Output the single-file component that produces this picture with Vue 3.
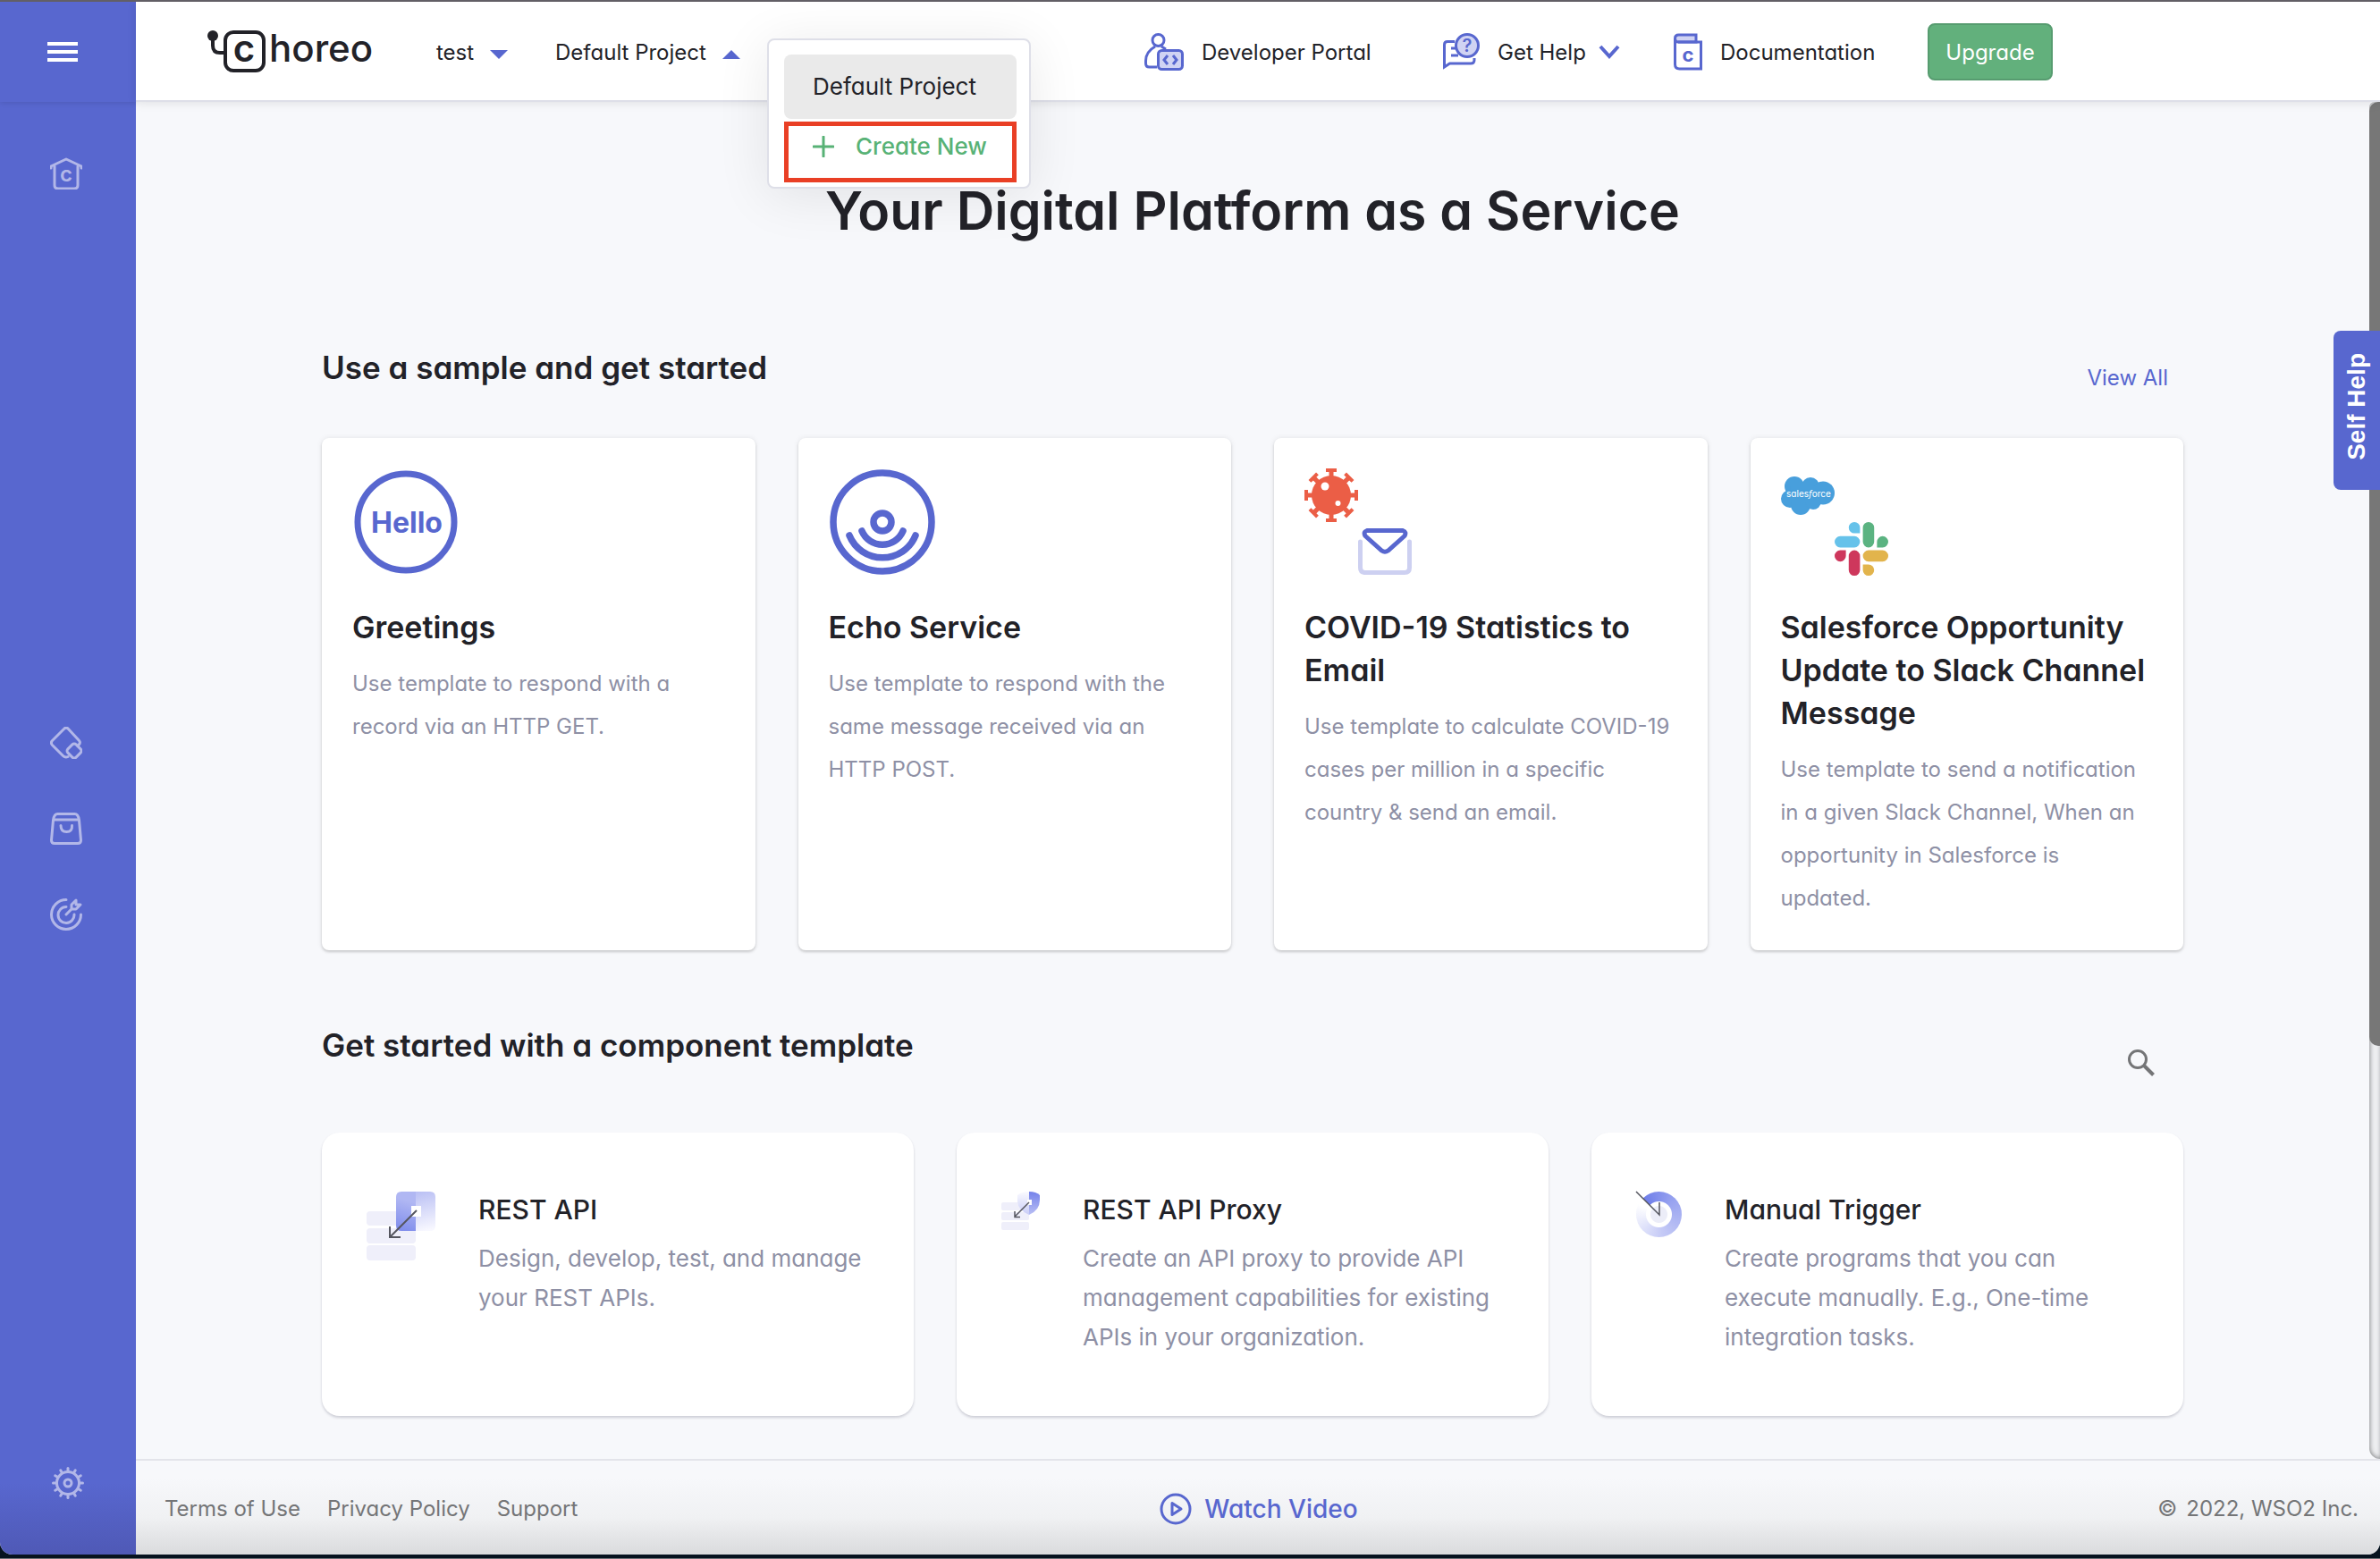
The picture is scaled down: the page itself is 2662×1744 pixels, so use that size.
<script setup>
import { ref } from 'vue'

const projectMenuOpen = ref(true)

const virusAngles = [0, 45, 90, 135, 180, 225, 270, 315]
const gearAngles = Array.from({ length: 12 }, (_, i) => i * 30)

const samples = [
  { icon: 'hello', title: 'Greetings', text: 'Use template to respond with a record via an HTTP GET.' },
  { icon: 'echo', title: 'Echo Service', text: 'Use template to respond with the same message received via an HTTP POST.' },
  { icon: 'covid', title: 'COVID-19 Statistics to Email', text: 'Use template to calculate COVID-19 cases per million in a specific country & send an email.' },
  { icon: 'sales', title: 'Salesforce Opportunity Update to Slack Channel Message', text: 'Use template to send a notification in a given Slack Channel, When an opportunity in Salesforce is updated.' },
]

const templates = [
  { icon: 'rest', title: 'REST API', text: 'Design, develop, test, and manage your REST APIs.' },
  { icon: 'proxy', title: 'REST API Proxy', text: 'Create an API proxy to provide API management capabilities for existing APIs in your organization.' },
  { icon: 'trigger', title: 'Manual Trigger', text: 'Create programs that you can execute manually. E.g., One-time integration tasks.' },
]
</script>

<template>
  <div class="window">
    <div class="shell">
      <aside class="sidebar">
        <div class="sidebar-top">
          <button class="icon-button" type="button" aria-label="Toggle menu">
            <svg width="34" height="24" viewBox="0 0 34 24" fill="#fff">
              <path d="M0 0h34v4H0zM0 9h34v4H0zM0 18h34v4H0z" />
            </svg>
          </button>
        </div>
        <nav class="rail" aria-label="Main">
          <a href="#" aria-label="Home">
            <svg class="rail-icon" viewBox="0 0 36 36">
              <path d="M1 12V10L18 2l17 8v2M5 10v21q0 4 4 4h18q4 0 4-4V10" />
              <text x="18" y="27" class="glyph-c" font-size="24">c</text>
            </svg>
          </a>
          <div class="rail-group">
            <a href="#" aria-label="Components">
              <svg class="rail-icon" viewBox="0 0 36 36">
                <path d="M31 21.500L33 19q1-2-.500-3.500L20.500 2.500Q18-.2 15.500 2.500L2.500 15.500Q.2 18 2.500 20.500L14.500 32.500Q17 35 20 33.500" />
                <rect x="20.500" y="20.500" width="13" height="13" rx="3" transform="rotate(45 27 27)" />
              </svg>
            </a>
            <a href="#" aria-label="Marketplace">
              <svg class="rail-icon" viewBox="0 0 36 36">
                <path d="M3.500 8.500L1.500 31q0 3.500 3.500 3.500h26q3.500 0 3.500-3.500L32.500 8.500q-1-7-5-7h-19q-4 0-5 7zM4 8h28M12 14.500q0 7 6.500 7t6-7" />
              </svg>
            </a>
            <a href="#" aria-label="Insights">
              <svg class="rail-icon" viewBox="0 0 36 36">
                <path d="M18 1.500A16.500 16.500 0 1 0 34.500 18M18 9.500A9 9 0 1 0 27 18M18 18l6-6v-5l5-5v5h5l-5 5h-5" />
              </svg>
            </a>
          </div>
          <a class="rail-settings" href="#" aria-label="Settings">
            <svg class="rail-icon" viewBox="0 0 36 36">
              <circle cx="18" cy="18" r="12.500" />
              <circle cx="18" cy="18" r="4" />
              <path v-for="a in gearAngles" :key="a" d="M18 5V1.500" :transform="`rotate(${a} 18 18)`" />
            </svg>
          </a>
        </nav>
      </aside>

      <div class="main">
        <header class="topbar">
          <a class="logo" href="#" aria-label="Choreo">
            <svg width="188" height="60" viewBox="0 -5 188 60">
              <circle cx="6" cy="7" r="6" fill="#222228" />
              <path d="M6 8v10q0 8 8 8h5" fill="none" stroke="#222228" stroke-width="4" />
              <rect x="20" y="3" width="43" height="43" rx="9" fill="none" stroke="#222228" stroke-width="4" />
              <text x="41" y="36" text-anchor="middle" font-size="42" font-weight="600" fill="#222228">c</text>
              <text x="69" y="36" font-size="42" font-weight="500" fill="#222228">horeo</text>
            </svg>
          </a>
          <button class="picker org" type="button" aria-haspopup="listbox">
            test
            <svg width="20" height="10" viewBox="0 0 20 10"><path d="M0 0h20L10 10z" fill="#5867cf" /></svg>
          </button>
          <div class="project">
            <button class="picker" type="button" aria-haspopup="listbox" :aria-expanded="projectMenuOpen" @click="projectMenuOpen = !projectMenuOpen">
              Default Project
              <svg width="20" height="10" viewBox="0 0 20 10"><path d="M0 10h20L10 0z" fill="#5867cf" /></svg>
            </button>
            <div v-if="projectMenuOpen" class="menu">
              <button class="menu-item" type="button">Default Project</button>
              <button class="menu-create" type="button">
                <svg width="24" height="24" viewBox="0 0 24 24"><path d="M12 1v22M1 12h22" stroke="#58b276" stroke-width="3" stroke-linecap="round" /></svg>
                Create New
              </button>
            </div>
          </div>

          <nav class="links" aria-label="Resources">
            <a class="portal" href="#">
              <svg width="44" height="42" viewBox="0 0 44 42" fill="none" stroke="#5867cf" stroke-width="3">
                <circle cx="15.500" cy="8" r="6.500" />
                <path d="M12 15Q1.500 21 1.500 31v3q0 4 4 4H14M19 15l5 3" />
                <rect x="15.500" y="19.500" width="27" height="21" rx="4" fill="#d0d3f3" />
                <path d="M26 25l-4 5 4 5M32 25l4 5-4 5" />
              </svg>
              Developer Portal
            </a>
            <button class="help" type="button">
              <svg width="41" height="42" viewBox="0 0 41 42" fill="none" stroke="#5867cf" stroke-width="3">
                <path d="M13 9.500H5q-3.500 0-3.500 3.500v25l6-4H31q4 0 4-4v-2M9 17h5M9 25h8" />
                <circle cx="27" cy="14" r="12.500" fill="#d0d3f3" />
                <text x="27" y="21" text-anchor="middle" font-size="20" font-weight="600" fill="#5867cf" stroke="none">?</text>
              </svg>
              Get Help
              <svg class="chevron" width="24" height="16" viewBox="0 0 24 16"><path d="M2 2l10 11L22 2" fill="none" stroke="#5867cf" stroke-width="4" /></svg>
            </button>
            <a class="docs" href="#">
              <svg width="32" height="42" viewBox="0 0 32 42" fill="none" stroke="#5867cf" stroke-width="3">
                <path d="M1.500 6q0-4 4-4H25v8H5q-3.500 0-3.500-4z" fill="#d0d3f3" />
                <path d="M1.500 6v29q0 5 5 5h24V10H5" />
                <text x="16" y="32" text-anchor="middle" font-size="22" font-weight="700" fill="#5867cf" stroke="none">c</text>
              </svg>
              Documentation
            </a>
            <button class="upgrade" type="button">Upgrade</button>
          </nav>
        </header>

        <div class="body">
          <main class="content">
            <h1>Your Digital Platform as a Service</h1>

            <section>
              <div class="section-head">
                <h2>Use a sample and get started</h2>
                <a class="view-all" href="#">View All</a>
              </div>
              <div class="samples">
                <article v-for="s in samples" :key="s.title" class="sample">
                  <svg v-if="s.icon === 'hello'" class="sample-icon" viewBox="0 0 120 120">
                    <circle cx="60" cy="60" r="54" fill="none" stroke="#5867cf" stroke-width="7" />
                    <text x="61" y="72" text-anchor="middle" font-size="32" font-weight="700" fill="#5867cf">Hello</text>
                  </svg>
                  <svg v-else-if="s.icon === 'echo'" class="sample-icon" viewBox="0 0 120 120" fill="none" stroke="#5867cf" stroke-width="7.500" stroke-linecap="round">
                    <circle cx="60" cy="60" r="55" />
                    <circle cx="60" cy="60" r="10" />
                    <path d="M37 70A25 25 0 0 0 83 70M23 75A40 40 0 0 0 97 75" />
                  </svg>
                  <svg v-else-if="s.icon === 'covid'" class="sample-icon" viewBox="0 0 120 120">
                    <g fill="#eb5e46">
                      <circle cx="30" cy="30" r="22" />
                      <path v-for="a in virusAngles" :key="a" d="M24 0h12v4h-3.500v6h-5V4H24z" :transform="`rotate(${a} 30 30)`" />
                    </g>
                    <circle cx="23" cy="20" r="4.500" fill="#fff" />
                    <circle cx="37.500" cy="39" r="3" fill="#fff" />
                    <path d="M62.500 82v29q0 5.500 5.500 5.500h44q5.500 0 5.500-5.500V82" fill="none" stroke="#cdd0f1" stroke-width="5" stroke-linecap="round" />
                    <path d="M70 69.500h40q4.500 1.500 2 6L93.500 92q-3.500 2.500-7 0L68 75.500q-2.500-4.500 2-6z" fill="none" stroke="#5867cf" stroke-width="5" />
                  </svg>
                  <svg v-else class="sample-icon" viewBox="0 0 120 120">
                    <g fill="#489fdc">
                      <circle cx="15" cy="20" r="11" />
                      <circle cx="33" cy="20" r="10" />
                      <circle cx="47" cy="27.500" r="13" />
                      <circle cx="10" cy="34" r="10" />
                      <circle cx="22" cy="41" r="11" />
                      <circle cx="36" cy="37" r="9" />
                      <path d="M10 20h36v18H12z" />
                    </g>
                    <text x="31" y="32" text-anchor="middle" font-size="10" fill="#fff">sales<tspan font-style="italic">f</tspan>orce</text>
                    <g transform="translate(60 60) scale(2.500)">
                      <path fill="#ce375c" d="M5.042 15.165a2.528 2.528 0 0 1-2.520 2.523A2.528 2.528 0 0 1 0 15.165a2.527 2.527 0 0 1 2.522-2.520h2.520v2.520zM6.313 15.165a2.527 2.527 0 0 1 2.521-2.520 2.527 2.527 0 0 1 2.521 2.520v6.313A2.528 2.528 0 0 1 8.834 24a2.528 2.528 0 0 1-2.521-2.522v-6.313z" />
                      <path fill="#66c2ea" d="M8.834 5.042a2.528 2.528 0 0 1-2.521-2.520A2.528 2.528 0 0 1 8.834 0a2.528 2.528 0 0 1 2.521 2.522v2.520H8.834zM8.834 6.313a2.528 2.528 0 0 1 2.521 2.521 2.528 2.528 0 0 1-2.521 2.521H2.522A2.528 2.528 0 0 1 0 8.834a2.528 2.528 0 0 1 2.522-2.521h6.312z" />
                      <path fill="#5bb381" d="M18.956 8.834a2.528 2.528 0 0 1 2.522-2.521A2.528 2.528 0 0 1 24 8.834a2.528 2.528 0 0 1-2.522 2.521h-2.522V8.834zM17.688 8.834a2.528 2.528 0 0 1-2.523 2.521 2.527 2.527 0 0 1-2.520-2.521V2.522A2.527 2.527 0 0 1 15.165 0a2.528 2.528 0 0 1 2.523 2.522v6.312z" />
                      <path fill="#e2b44c" d="M15.165 18.956a2.528 2.528 0 0 1 2.523 2.522A2.528 2.528 0 0 1 15.165 24a2.527 2.527 0 0 1-2.520-2.522v-2.522h2.520zM15.165 17.688a2.527 2.527 0 0 1-2.520-2.523 2.526 2.526 0 0 1 2.520-2.520h6.313A2.527 2.527 0 0 1 24 15.165a2.528 2.528 0 0 1-2.522 2.523h-6.313z" />
                    </g>
                  </svg>
                  <h3>{{ s.title }}</h3>
                  <p>{{ s.text }}</p>
                </article>
              </div>
            </section>

            <section>
              <div class="section-head templates-head">
                <h2>Get started with a component template</h2>
                <button class="search" type="button" aria-label="Search templates">
                  <svg width="30" height="30" viewBox="0 0 30 30" fill="none" stroke="#747577">
                    <circle cx="11" cy="11" r="9.500" stroke-width="3" />
                    <path d="M18 18l10.500 10.500" stroke-width="4" />
                  </svg>
                </button>
              </div>
              <div class="templates">
                <article v-for="t in templates" :key="t.title" class="template">
                  <svg v-if="t.icon === 'rest'" width="77" height="77" viewBox="0 0 77 77">
                    <defs>
                      <linearGradient id="rest-left" x1="0" y1="44" x2="14" y2="0" gradientUnits="userSpaceOnUse">
                        <stop offset="0" stop-color="#6f7ee9" /><stop offset="1" stop-color="#b0b7f3" />
                      </linearGradient>
                      <linearGradient id="rest-right" x1="55" y1="0" x2="66" y2="44" gradientUnits="userSpaceOnUse">
                        <stop offset="0" stop-color="#b9bff4" /><stop offset="1" stop-color="#f8f8ff" />
                      </linearGradient>
                    </defs>
                    <g fill="#efeffa">
                      <rect y="22" width="55" height="16" rx="4" />
                      <rect y="41" width="55" height="17" rx="4" />
                      <rect y="60" width="55" height="17" rx="4" />
                    </g>
                    <path d="M55 0v44H39q-6 0-6-6V6q0-6 6-6z" fill="url(#rest-left)" />
                    <path d="M55 0v44h16q6 0 6-6V6q0-6-6-6z" fill="url(#rest-right)" />
                    <path d="M50 16h11v12H50z" fill="#fff" />
                    <path d="M56 21L26 51M26 39v12h12" fill="none" stroke="#55565f" stroke-width="2" />
                  </svg>
                  <svg v-else-if="t.icon === 'proxy'" width="43" height="43" viewBox="0 0 43 43">
                    <defs>
                      <linearGradient id="proxy-left" x1="0" y1="0" x2="0" y2="1">
                        <stop offset="0" stop-color="#fafaff" /><stop offset="1" stop-color="#c9cdf7" />
                      </linearGradient>
                      <linearGradient id="proxy-right" x1="0" y1="0" x2="0" y2="1">
                        <stop offset="0" stop-color="#7482ea" /><stop offset="1" stop-color="#b9bff4" />
                      </linearGradient>
                    </defs>
                    <g fill="#efeffa">
                      <rect y="12" width="31" height="9" rx="2" />
                      <rect y="23" width="31" height="9" rx="2" />
                      <rect y="34" width="31" height="9" rx="2" />
                    </g>
                    <path d="M31 0v26q-12-5-13-15V4Q23 0 31 0z" fill="url(#proxy-left)" />
                    <path d="M31 0v26q12-5 12-17V4q-4-4-12-4z" fill="url(#proxy-right)" />
                    <path d="M29 9h5v6h-5z" fill="#fff" />
                    <path d="M31 12L15 28M15 22v6.500h6" fill="none" stroke="#55565f" stroke-width="1.500" />
                  </svg>
                  <svg v-else class="trigger-icon" width="51" height="51" viewBox="0 0 51 51">
                    <path d="M0 0l26 26V12" fill="none" stroke="#55565f" stroke-width="1.500" />
                  </svg>
                  <div class="template-text">
                    <h3>{{ t.title }}</h3>
                    <p>{{ t.text }}</p>
                  </div>
                </article>
              </div>
            </section>
          </main>
          <div class="scrollbar"><div class="thumb"></div></div>
          <button class="self-help" type="button">Self Help</button>
        </div>

        <footer class="footer">
          <nav class="legal" aria-label="Legal">
            <a href="#">Terms of Use</a>
            <a href="#">Privacy Policy</a>
            <a href="#">Support</a>
          </nav>
          <a class="watch" href="#">
            <svg width="36" height="36" viewBox="0 0 36 36" fill="none" stroke="#5867cf" stroke-width="3" stroke-linejoin="round">
              <circle cx="18" cy="18" r="16" /><path d="M14 11.500v13l10-6.500z" />
            </svg>
            Watch Video
          </a>
          <p class="copyright"><span>©</span><span>2022, WSO2 Inc.</span></p>
        </footer>
      </div>
    </div>
    <div class="desktop-edge"></div>
  </div>
</template>

<style>
body {
  margin: 0;
  background: #07131f;
}
</style>

<style scoped>
.window {
  display: flex;
  flex-direction: column;
  min-height: 100vh;
  font-family: Inter, "Liberation Sans", sans-serif;
  font-feature-settings: "cv11";
  font-size: 24px;
  color: #222228;
}
.window * { box-sizing: border-box; }
button {
  padding: 0;
  border: 0;
  background: none;
  font: inherit;
  font-feature-settings: inherit;
  color: inherit;
  cursor: pointer;
}
a { color: inherit; text-decoration: none; }
h1, h2, h3, p { margin: 0; }
svg { display: block; flex: none; }

.shell {
  display: flex;
  flex: 1;
  border-top: 2px solid #625f66;
  border-radius: 0 0 14px 14px;
  overflow: hidden;
  background: #f7f8fb;
}
.desktop-edge {
  height: 6px;
  border-bottom: 2px solid #6d7176;
  background: #07131f;
}

.sidebar {
  display: flex;
  flex-direction: column;
  width: 152px;
  flex: none;
  background: linear-gradient(to top, #4f59b6, #5867cf 80px);
}
.sidebar-top {
  display: flex;
  align-items: center;
  height: 112px;
  padding: 2px 0 0 53px;
  box-shadow: 0 1px 6px rgba(0, 0, 0, 0.12);
}
.rail {
  display: flex;
  flex: 1;
  flex-direction: column;
  align-items: center;
  padding: 62px 4px 62px 0;
}
.rail-icon {
  width: 36px;
  height: 36px;
  fill: none;
  stroke: #b2b7e8;
  stroke-width: 3;
  stroke-linejoin: round;
  stroke-linecap: round;
}
.glyph-c {
  fill: #b2b7e8;
  stroke: none;
  font-weight: 600;
  text-anchor: middle;
}
.rail-group {
  display: flex;
  flex-direction: column;
  gap: 60px;
  margin: auto 0;
}
.rail-settings { padding-left: 4px; }

.main {
  display: flex;
  flex: 1;
  flex-direction: column;
  min-width: 0;
}
.topbar {
  position: relative;
  z-index: 2;
  display: flex;
  align-items: center;
  height: 112px;
  padding: 2px 366px 0 80px;
  border-bottom: 2px solid #dedfe8;
  background: #fff;
  box-shadow: 0 2px 10px rgba(0, 0, 0, 0.09);
}
.logo { width: 256px; }
.picker {
  display: flex;
  align-items: center;
  gap: 18px;
  white-space: nowrap;
}
.picker svg { margin-top: 6px; }
.org { width: 133px; }
.project { position: relative; }
.menu {
  position: absolute;
  top: -1px;
  left: 237px;
  width: 295px;
  height: 168px;
  padding: 16px 14px 5px 17px;
  border: 2px solid #dedfe8;
  border-radius: 8px;
  background: #fff;
  box-shadow: 0 8px 60px rgba(0, 0, 0, 0.09);
  font-size: 26px;
}
.menu-item {
  display: block;
  width: 100%;
  height: 72px;
  padding-left: 32px;
  border-radius: 8px;
  background: #eaeaea;
  text-align: left;
}
.menu-create {
  display: flex;
  align-items: center;
  gap: 24px;
  width: 100%;
  height: 68px;
  margin-top: 3px;
  padding: 0 0 12px 27px;
  border: 5px solid #e93f25;
  color: #58b276;
  font-weight: 500;
}
.links {
  display: flex;
  align-items: center;
  margin-left: auto;
  white-space: nowrap;
}
.links > a, .help {
  display: flex;
  align-items: center;
  gap: 20px;
}
.portal { width: 334px; }
.help { width: 258px; }
.docs { width: 284px; }
.chevron { margin-left: -6px; }
.upgrade {
  width: 140px;
  height: 64px;
  border: 2px solid #579c70;
  border-radius: 8px;
  background: #62b07c;
  color: #fff;
}

.body {
  position: relative;
  display: flex;
  flex: 1;
}
.content {
  flex: 1;
  min-width: 0;
  padding: 86px 208px 48px;
}
.scrollbar {
  width: 12px;
  border-radius: 6px 0 0 12px;
  background: #eeeff1;
  box-shadow: inset 1px -1px 5px #8f9093;
}
.thumb {
  height: 1056px;
  border-radius: 10px 0 0 10px;
  background: #777;
}
.self-help {
  position: absolute;
  top: 256px;
  right: 0;
  width: 52px;
  height: 178px;
  padding-bottom: 8px;
  border-radius: 8px 0 0 8px;
  background: #5867cf;
  color: #fff;
  font-family: "Liberation Sans", Arial, sans-serif;
  font-size: 28px;
  font-weight: 700;
  writing-mode: sideways-lr;
}

h1 {
  margin-bottom: 115px;
  font-size: 59px;
  font-weight: 600;
  line-height: 72px;
  text-align: center;
}
.section-head {
  display: flex;
  align-items: flex-start;
  justify-content: space-between;
  height: 103px;
}
h2 {
  font-size: 35px;
  font-weight: 600;
  line-height: 48px;
}
.view-all {
  padding: 12px 17px 0 0;
  line-height: 48px;
  color: #5867cf;
}
.samples {
  display: grid;
  grid-template-columns: repeat(4, 1fr);
  gap: 48px;
}
.sample {
  padding: 34px;
  border-radius: 8px;
  background: #fff;
  box-shadow: 0 2px 3px rgba(0, 0, 0, 0.16), 0 0 6px rgba(0, 0, 0, 0.08);
}
.sample-icon {
  width: 120px;
  height: 120px;
  margin-bottom: 34px;
}
.sample h3 {
  margin-bottom: 15px;
  font-size: 34px;
  font-weight: 600;
  line-height: 48px;
}
.sample p {
  color: #8e90a5;
  line-height: 48px;
}

.templates-head {
  height: 122px;
  margin-top: 82px;
}
.search { padding: 29px 32px 0 0; }
.templates {
  display: grid;
  grid-template-columns: repeat(3, 1fr);
  gap: 48px;
}
.template {
  display: flex;
  align-items: flex-start;
  gap: 48px;
  padding: 66px 44px 66px 50px;
  border-radius: 20px;
  background: #fff;
  box-shadow: 0 2px 3px rgba(40, 42, 70, 0.2);
}
.template h3 {
  margin-bottom: 13px;
  font-size: 30px;
  font-weight: 500;
  line-height: 40px;
}
.template p {
  color: #8e90a5;
  font-size: 26px;
  line-height: 44px;
}
.trigger-icon {
  border-radius: 50%;
  overflow: visible;
  background:
    radial-gradient(circle, #ecedf8 9px, #fff 10px, #fff 14px, transparent 15px),
    conic-gradient(from -45deg, #6f7ee9, #98a3f0 25%, #c5caf6 60%, #fff 95%);
}

.footer {
  display: flex;
  align-items: center;
  height: 107px;
  padding: 2px 24px 0 32px;
  border-top: 2px solid #e3e4ea;
  background: linear-gradient(to top, #dadbdd, #f0f1f3 42px, #f7f8fb 86px);
  color: #747577;
}
.legal, .copyright {
  display: flex;
  flex: 1;
  gap: 30px;
}
.copyright {
  justify-content: flex-end;
  gap: 10px;
}
.watch {
  display: flex;
  align-items: center;
  gap: 14px;
  padding-right: 6px;
  color: #5867cf;
  font-size: 28px;
  font-weight: 500;
}
</style>
